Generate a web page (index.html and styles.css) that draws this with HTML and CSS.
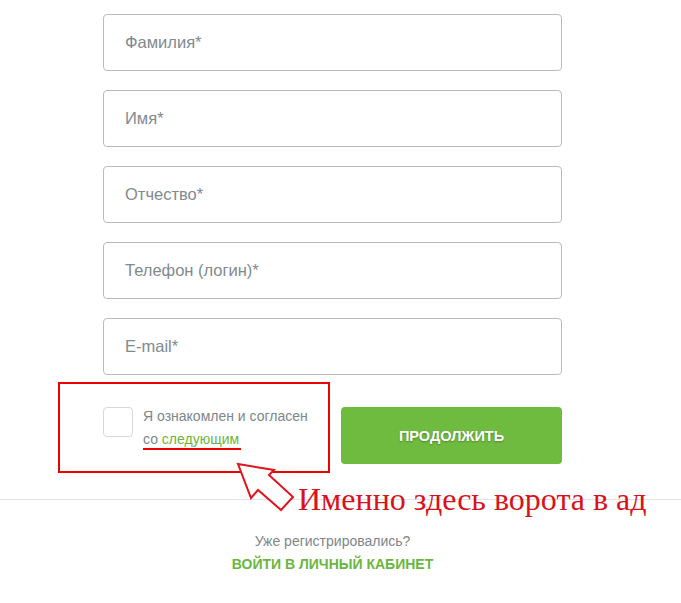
FILE: index.html
```html
<!DOCTYPE html>
<html lang="ru">
<head>
<meta charset="UTF-8">
<meta name="viewport" content="width=device-width, initial-scale=1.0">
<title>Регистрация</title>
<link rel="stylesheet" href="styles.css">
</head>
<body>

<div class="page">
    <form class="reg-form">
        <input type="text" class="field" placeholder="Фамилия*">
        <input type="text" class="field" placeholder="Имя*">
        <input type="text" class="field" placeholder="Отчество*">
        <input type="text" class="field" placeholder="Телефон (логин)*">
        <input type="text" class="field" placeholder="E-mail*">

        <div class="agree-row">
            <label class="agree">
                <span class="check"></span>
                <span class="agree-text">Я ознакомлен и согласен<br>со <a href="#" class="green-link">следующим</a></span>
            </label>
            <button type="button" class="btn-next">ПРОДОЛЖИТЬ</button>
        </div>
    </form>

    <div class="divider"></div>

    <div class="login">
        <div class="login-q">Уже регистрировались?</div>
        <a href="#" class="login-link">ВОЙТИ В ЛИЧНЫЙ КАБИНЕТ</a>
    </div>

    <!-- пометки поверх скриншота -->
    <div class="mark-box"></div>
    <div class="mark-line"></div>
    <svg class="mark-arrow" width="70" height="60" viewBox="0 0 70 60">
        <polygon points="7,4 43,10 38,15 62,37 50,50 27,30 20,38" fill="#fff" stroke="#e0141e" stroke-width="2" stroke-linejoin="miter"/>
    </svg>
    <div class="mark-text">Именно здесь ворота в ад</div>
</div>

</body>
</html>
```

FILE: styles.css
```css
body {
    margin: 0;
    background-color: #fff;
    font-family: 'Liberation Sans', Arial, sans-serif;
}
.page {
    position: relative;
    width: 681px;
    height: 603px;
    overflow: hidden;
}
.reg-form {
    width: 459px;
    margin-left: 103px;
    padding-top: 14px;
}
.field {
    display: block;
    box-sizing: border-box;
    width: 100%;
    height: 57px;
    margin-bottom: 19px;
    padding: 0 21px;
    font-family: 'Liberation Sans', Arial, sans-serif;
    font-size: 16.5px;
    color: #333;
    border: 1px solid #b9bcbe;
    border-radius: 4px;
    outline: none;
}
.field::placeholder {
    color: #818a8f;
}
.agree-row {
    display: flex;
    justify-content: space-between;
    margin-top: 32px;
}
.agree {
    display: flex;
    gap: 10px;
    cursor: pointer;
}
.check {
    box-sizing: border-box;
    width: 30px;
    height: 30px;
    border: 1px solid #d6d8da;
    border-radius: 4px;
    flex-shrink: 0;
}
.agree-text {
    font-size: 14px;
    line-height: 23px;
    color: #7d868b;
    margin-top: -2px;
}
.green-link {
    color: #6ab540;
    text-decoration: none;
}
.btn-next {
    width: 221px;
    height: 57px;
    background-color: #6fbb40;
    color: #fff;
    font-family: 'Liberation Sans', Arial, sans-serif;
    font-size: 14.5px;
    font-weight: bold;
    border: none;
    border-radius: 4px;
    text-shadow: 0 1px 2px rgba(0, 0, 0, 0.3);
    cursor: pointer;
}
.divider {
    height: 1px;
    margin-top: 35px;
    background-color: #e3e3e3;
}
.login {
    width: 459px;
    margin-left: 103px;
    padding-top: 33px;
    text-align: center;
}
.login-q {
    font-size: 14px;
    color: #7d868b;
}
.login-link {
    display: inline-block;
    margin-top: 7px;
    font-size: 14px;
    font-weight: bold;
    color: #6ab540;
    text-decoration: none;
}
.mark-box {
    position: absolute;
    left: 58px;
    top: 382px;
    width: 268px;
    height: 87px;
    border: 2px solid #ee0000;
}
.mark-line {
    position: absolute;
    left: 143px;
    top: 448px;
    width: 98px;
    height: 2px;
    background-color: #ee0000;
}
.mark-arrow {
    position: absolute;
    left: 231px;
    top: 460px;
}
.mark-text {
    position: absolute;
    left: 298px;
    top: 481px;
    font-family: 'Liberation Serif', 'Times New Roman', serif;
    font-size: 32px;
    color: #d8121b;
    white-space: nowrap;
}
```
